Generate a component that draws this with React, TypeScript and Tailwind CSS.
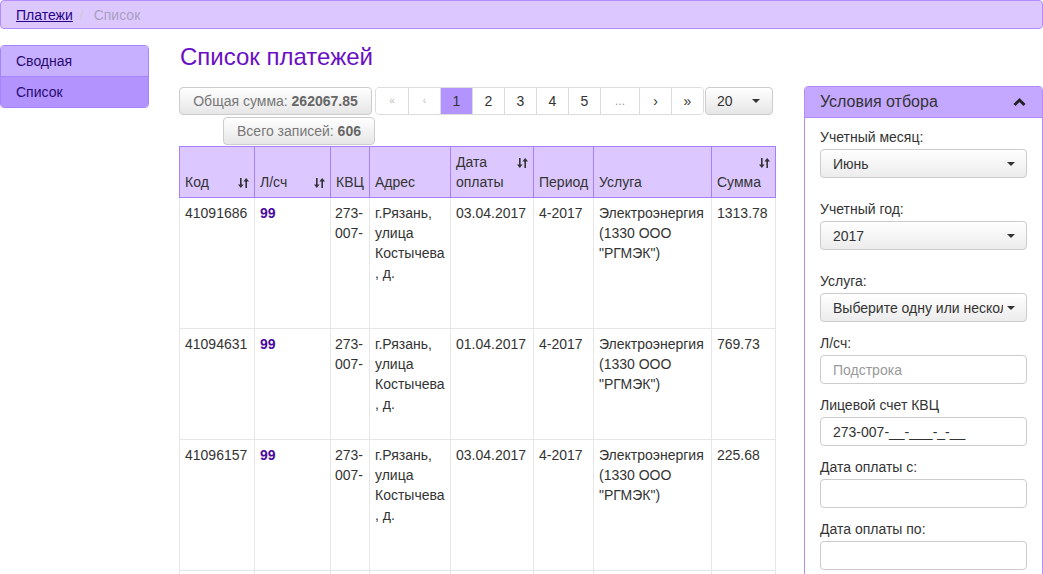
import React from "react";

const SortIcon: React.FC = () => (
  <svg width="11" height="12" viewBox="0 0 11 12" className="inline-block" fill="#333">
    <rect x="2" y="1" width="1.6" height="8" />
    <path d="M0 7.5 L5.6 7.5 L2.8 11 Z" />
    <rect x="7.4" y="3" width="1.6" height="8" />
    <path d="M5.4 4.5 L11 4.5 L8.2 1 Z" />
  </svg>
);

const Caret: React.FC = () => (
  <span className="inline-block w-0 h-0 border-l-[4px] border-r-[4px] border-t-[4px] border-l-transparent border-r-transparent border-t-[#333]" />
);

type Row = { code: string; date: string; sum: string; h: string };

const rows: Row[] = [
  { code: "41091686", date: "03.04.2017", sum: "1313.78", h: "h-[131px]" },
  { code: "41094631", date: "01.04.2017", sum: "769.73", h: "h-[111px]" },
  { code: "41096157", date: "03.04.2017", sum: "225.68", h: "h-[131px]" },
];

const pages = ["«", "‹", "1", "2", "3", "4", "5", "…", "›", "»"];

const App: React.FC = () => {
  return (
    <div className="w-[1043px] h-[574px] overflow-hidden bg-white text-[14px] leading-[20px] text-[#333] font-['Liberation_Sans',Arial,sans-serif]">
      {/* breadcrumb */}
      <div className="h-[29px] w-[1043px] bg-[#dcc8ff] border border-[#b38bff] rounded-[4px] flex items-center pl-[15px] text-[14px]">
        <span className="text-[#26008a] underline">Платежи</span>
        <span className="text-[#ccc] pl-[7px] pr-[10px]">/</span>
        <span className="text-[#a99fc0]">Список</span>
      </div>

      <div className="flex flex-row items-start">
        {/* sidebar */}
        <div className="w-[149px] mt-[16px] rounded-[4px] border border-[#a784ff] overflow-hidden text-[#2a0a70]">
          <div className="h-[31px] bg-[#c6b0ff] border-b border-[#a784ff] pl-[15px] flex items-center">Сводная</div>
          <div className="h-[30px] bg-[#b394ff] pl-[15px] flex items-center">Список</div>
        </div>

        {/* main */}
        <div className="w-[596px] ml-[30px] flex flex-col">
          <h1 className="mt-[13px] h-[30px] leading-[30px] text-[24px] text-[#6a0fc4] pl-[1px]">Список платежей</h1>

          <div className="mt-[15px] flex flex-row items-center">
            <div className="shrink-0 h-[28px] w-[193px] rounded-[4px] border border-[#ccc] bg-gradient-to-b from-white to-[#e6e6e6] flex items-center justify-center text-[#777]">
              Общая сумма:&nbsp;<b className="text-[#666]">262067.85</b>
            </div>
            <div className="shrink-0 ml-[3px] h-[28px] flex flex-row rounded-[4px] border border-[#ddd] overflow-hidden">
              {pages.map((p, i) => (
                <div
                  key={i}
                  className={
                    (i > 0 ? "border-l border-[#ddd] " : "") +
                    (p === "1" ? "bg-[#b394ff] " : "bg-white ") +
                    (p === "…" ? "w-[39px] " : "w-[32px] ") +
                    (i < 2 ? "text-[#bbb] text-[10px] " : "text-[#333] ") +
                    "flex items-center justify-center"
                  }
                >
                  {p === "…" ? <span className="text-[#999] text-[12px]">...</span> : p}
                </div>
              ))}
            </div>
            <div className="shrink-0 ml-[1px] h-[28px] w-[68px] rounded-[4px] border border-[#ccc] bg-gradient-to-b from-white to-[#e6e6e6] flex items-center justify-between pl-[11px] pr-[12px]">
              <span>20</span>
              <Caret />
            </div>
          </div>

          <div className="mt-[2px] ml-[44px] h-[28px] w-[152px] rounded-[4px] border border-[#ccc] bg-gradient-to-b from-white to-[#e6e6e6] flex items-center justify-center text-[#777]">
            Всего записей:&nbsp;<b className="text-[#666]">606</b>
          </div>

          <table className="mt-[1px] w-[596px] table-fixed border-collapse border-x border-[#a77fff]">
            <colgroup>
              <col className="w-[75px]" />
              <col className="w-[76px]" />
              <col className="w-[39px]" />
              <col className="w-[81px]" />
              <col className="w-[83px]" />
              <col className="w-[60px]" />
              <col className="w-[118px]" />
              <col className="w-[64px]" />
            </colgroup>
            <thead>
              <tr className="h-[51px] bg-[#dcc8ff]">
                <th className="border border-[#a77fff] align-bottom text-left font-normal p-[5px]">
                  <span className="float-right"><SortIcon /></span>Код
                </th>
                <th className="border border-[#a77fff] align-bottom text-left font-normal p-[5px]">
                  <span className="float-right"><SortIcon /></span>Л/сч
                </th>
                <th className="border border-[#a77fff] align-bottom text-left font-normal p-[5px]">КВЦ</th>
                <th className="border border-[#a77fff] align-bottom text-left font-normal p-[5px]">Адрес</th>
                <th className="border border-[#a77fff] align-bottom text-left font-normal p-[5px]">
                  <span className="float-right"><SortIcon /></span>Дата оплаты
                </th>
                <th className="border border-[#a77fff] align-bottom text-left font-normal p-[5px]">Период</th>
                <th className="border border-[#a77fff] align-bottom text-left font-normal p-[5px]">Услуга</th>
                <th className="border border-[#a77fff] align-bottom text-left font-normal p-[5px]">
                  <span className="float-right"><SortIcon /></span>
                  <br />
                  Сумма
                </th>
              </tr>
            </thead>
            <tbody>
              {rows.map((r) => (
                <tr key={r.code} className={r.h}>
                  <td className="border border-[#e6e6e6] align-top p-[5px]">{r.code}</td>
                  <td className="border border-[#e6e6e6] align-top p-[5px]">
                    <b className="text-[#4b0ba0]">99</b>
                  </td>
                  <td className="border border-[#e6e6e6] align-top py-[5px] pl-[4px] pr-0">
                    273-
                    <br />
                    007-
                  </td>
                  <td className="border border-[#e6e6e6] align-top p-[5px]">
                    г.Рязань,
                    <br />
                    улица
                    <br />
                    Костычева
                    <br />, д.
                  </td>
                  <td className="border border-[#e6e6e6] align-top p-[5px]">{r.date}</td>
                  <td className="border border-[#e6e6e6] align-top p-[5px]">4-2017</td>
                  <td className="border border-[#e6e6e6] align-top p-[5px]">
                    Электроэнергия
                    <br />
                    (1330 ООО
                    <br />
                    "РГМЭК")
                  </td>
                  <td className="border border-[#e6e6e6] align-top p-[5px]">{r.sum}</td>
                </tr>
              ))}
              <tr className="h-[131px]">
                <td className="border border-[#e6e6e6]" />
                <td className="border border-[#e6e6e6]" />
                <td className="border border-[#e6e6e6]" />
                <td className="border border-[#e6e6e6]" />
                <td className="border border-[#e6e6e6]" />
                <td className="border border-[#e6e6e6]" />
                <td className="border border-[#e6e6e6]" />
                <td className="border border-[#e6e6e6]" />
              </tr>
            </tbody>
          </table>
        </div>

        {/* filter panel */}
        <div className="ml-[29px] mt-[57px] w-[239px] rounded-t-[4px] border border-[#b38bff] h-[520px]">
          <div className="h-[31px] bg-[#c4a8ff] border-b border-[#b38bff] flex items-center justify-between pl-[15px] pr-[16px] text-[16px]">
            <span>Условия отбора</span>
            <svg width="13" height="10" viewBox="0 0 13 10">
              <path d="M1.5 8 L6.5 3 L11.5 8" stroke="#222" strokeWidth="3" fill="none" />
            </svg>
          </div>
          <div className="px-[15px] pt-[9px] flex flex-col">
            <div className="h-[20px]">Учетный месяц:</div>
            <div className="mt-[2px] h-[29px] rounded-[4px] border border-[#ccc] bg-gradient-to-b from-white to-[#ececec] flex items-center justify-between pl-[12px] pr-[11px]">
              <span>Июнь</span>
              <Caret />
            </div>
            <div className="mt-[21px] h-[20px]">Учетный год:</div>
            <div className="mt-[2px] h-[29px] rounded-[4px] border border-[#ccc] bg-gradient-to-b from-white to-[#ececec] flex items-center justify-between pl-[12px] pr-[11px]">
              <span>2017</span>
              <Caret />
            </div>
            <div className="mt-[21px] h-[20px]">Услуга:</div>
            <div className="mt-[2px] h-[29px] rounded-[4px] border border-[#ccc] bg-gradient-to-b from-white to-[#ececec] flex items-center justify-between pl-[12px] pr-[11px]">
              <span className="whitespace-nowrap overflow-hidden w-[170px]">Выберите одну или несколько</span>
              <Caret />
            </div>
            <div className="mt-[11px] h-[20px]">Л/сч:</div>
            <div className="mt-[2px] h-[29px] rounded-[4px] border border-[#ccc] bg-white flex items-center pl-[12px] text-[#999]">
              Подстрока
            </div>
            <div className="mt-[11px] h-[20px]">Лицевой счет КВЦ</div>
            <div className="mt-[2px] h-[29px] rounded-[4px] border border-[#ccc] bg-white flex items-center pl-[12px]">
              273-007-__-___-_-__
            </div>
            <div className="mt-[11px] h-[20px]">Дата оплаты с:</div>
            <div className="mt-[2px] h-[29px] rounded-[4px] border border-[#ccc] bg-white" />
            <div className="mt-[11px] h-[20px]">Дата оплаты по:</div>
            <div className="mt-[2px] h-[29px] rounded-[4px] border border-[#ccc] bg-white" />
          </div>
        </div>
      </div>
    </div>
  );
};

export default App;
